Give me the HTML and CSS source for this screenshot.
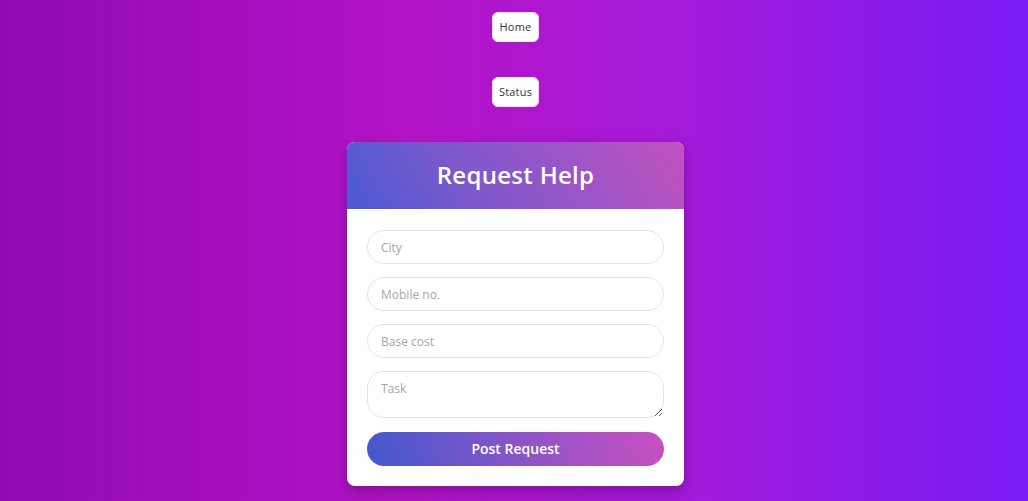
FILE: index.html
```html
<!DOCTYPE html>
<html lang="en">
<head>
<meta charset="utf-8">
<title>Request Help</title>
<link rel="stylesheet" href="styles.css">
</head>
<body>
<main class="page">
  <button class="nav-btn" type="button">Home</button>
  <button class="nav-btn" type="button">Status</button>
  <section class="card">
    <header class="card-head">
      <h1 class="card-title">Request Help</h1>
    </header>
    <form class="card-form">
      <input class="field" type="text" placeholder="City">
      <input class="field" type="text" placeholder="Mobile no.">
      <input class="field" type="text" placeholder="Base cost">
      <textarea class="field field-area" placeholder="Task"></textarea>
      <button class="submit" type="button">Post Request</button>
    </form>
  </section>
</main>
</body>
</html>
```

FILE: styles.css
```css
* { box-sizing: border-box; }
html, body { margin: 0; height: 100%; }
body {
  font-family: "Open Sans", "Noto Sans", sans-serif;
  background: linear-gradient(to right, #910ab0 0%, #b314c6 40%, #a51ad8 65%, #7a1cf5 100%);
  overflow: hidden;
}
.page {
  display: flex;
  flex-direction: column;
  align-items: center;
  gap: 35px;
  padding-top: 12px;
}
.nav-btn {
  width: 47px;
  height: 30px;
  margin-left: 3px;
  padding: 0 0 2px;
  border: 1px solid #e8e8e8;
  border-radius: 6px;
  background: #fff;
  color: #333;
  font-family: inherit;
  font-size: 11px;
  letter-spacing: 0.2px;
}
.card {
  width: 337px;
  margin-left: 3px;
  background: #fff;
  border-radius: 8px;
  overflow: hidden;
  box-shadow: 0 6px 14px rgba(60, 0, 90, 0.35);
}
.card-head {
  height: 67px;
  display: flex;
  align-items: center;
  justify-content: center;
  background: linear-gradient(60deg, #4a5ad2 0%, #7c58cc 35%, #a055c6 70%, #c250be 100%);
}
.card-title {
  margin: 0 0 2px;
  color: #fff;
  font-size: 24px;
  font-weight: 600;
  letter-spacing: 0.3px;
}
.card-form {
  display: flex;
  flex-direction: column;
  gap: 13px;
  padding: 21px 20px 20px;
}
.field {
  height: 34px;
  padding: 0 13px;
  border: 1px solid #e3e3e3;
  border-radius: 17px;
  font-family: inherit;
  font-size: 12px;
  color: #333;
  outline: none;
}
.field::placeholder { color: #a6a6a6; }
.field-area {
  height: 47px;
  padding: 8px 13px;
  resize: vertical;
  border-radius: 17px;
}
.submit {
  height: 34px;
  margin-top: 1px;
  padding: 0 0 2px;
  border: none;
  border-radius: 17px;
  background: linear-gradient(70deg, #4158d0 0%, #7a55c9 40%, #a552c4 70%, #c850c0 100%);
  color: #fff;
  font-family: inherit;
  font-size: 14px;
  font-weight: 600;
}
```
